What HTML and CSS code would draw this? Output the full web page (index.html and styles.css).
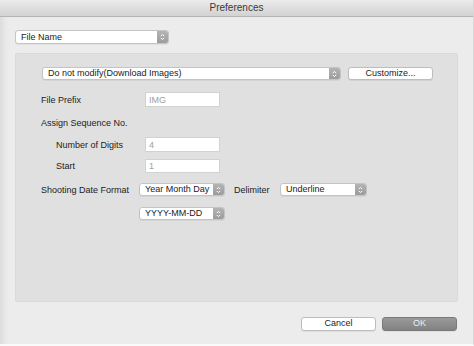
FILE: index.html
```html
<html>
<head>
<meta charset="utf-8"/>
<link rel="stylesheet" href="styles.css">
</head>
<body>

<div class="window">
  <div class="titlebar">Preferences</div>

  <div class="content">
    <div class="select top-select">
      <span class="select-text">File Name</span>
      <span class="select-arrow"><svg width="5" height="8" viewBox="0 0 5 8"><path d="M0.8 3.1 L2.5 1.4 L4.2 3.1 M0.8 4.9 L2.5 6.6 L4.2 4.9" fill="none" stroke="#fff" stroke-width="1"/></svg></span>
    </div>

    <div class="group">
      <div class="row row-mode">
        <div class="select mode-select">
          <span class="select-text">Do not modify(Download Images)</span>
          <span class="select-arrow"><svg width="5" height="8" viewBox="0 0 5 8"><path d="M0.8 3.1 L2.5 1.4 L4.2 3.1 M0.8 4.9 L2.5 6.6 L4.2 4.9" fill="none" stroke="#fff" stroke-width="1"/></svg></span>
        </div>
        <div class="button customize">Customize...</div>
      </div>

      <div class="row row-prefix">
        <span class="label">File Prefix</span>
        <div class="input">IMG</div>
      </div>

      <div class="row row-assign">
        <span class="label">Assign Sequence No.</span>
      </div>

      <div class="row row-digits">
        <span class="label indent">Number of Digits</span>
        <div class="input">4</div>
      </div>

      <div class="row row-start">
        <span class="label indent">Start</span>
        <div class="input">1</div>
      </div>

      <div class="row row-date">
        <span class="label date-label">Shooting Date Format</span>
        <div class="select date-select">
          <span class="select-text">Year Month Day</span>
          <span class="select-arrow"><svg width="5" height="8" viewBox="0 0 5 8"><path d="M0.8 3.1 L2.5 1.4 L4.2 3.1 M0.8 4.9 L2.5 6.6 L4.2 4.9" fill="none" stroke="#fff" stroke-width="1"/></svg></span>
        </div>
        <span class="label delim-label">Delimiter</span>
        <div class="select delim-select">
          <span class="select-text">Underline</span>
          <span class="select-arrow"><svg width="5" height="8" viewBox="0 0 5 8"><path d="M0.8 3.1 L2.5 1.4 L4.2 3.1 M0.8 4.9 L2.5 6.6 L4.2 4.9" fill="none" stroke="#fff" stroke-width="1"/></svg></span>
        </div>
      </div>

      <div class="row row-pattern">
        <div class="select date-select">
          <span class="select-text">YYYY-MM-DD</span>
          <span class="select-arrow"><svg width="5" height="8" viewBox="0 0 5 8"><path d="M0.8 3.1 L2.5 1.4 L4.2 3.1 M0.8 4.9 L2.5 6.6 L4.2 4.9" fill="none" stroke="#fff" stroke-width="1"/></svg></span>
        </div>
      </div>
    </div>

    <div class="buttons">
      <div class="button cancel">Cancel</div>
      <div class="button ok">OK</div>
    </div>
  </div>
</div>

</body>
</html>
```

FILE: styles.css
```css
/* Preferences dialog */
body
	{margin:0;
	background-color:#ececec;
	font-family:"Liberation Sans","Arial",sans-serif;
	font-size:9px;
	color:#222222;}
.window
	{width:474px;
	height:346px;
	box-sizing:border-box;
	background:linear-gradient(to right, #dcdcdc 0, #e9e9e9 6px, #ececec 10px);
	border-right:1px solid #d8d8d8;
	border-bottom:2px solid #fafafa;
	display:flex;
	flex-direction:column;}
.titlebar
	{height:17px;
	box-sizing:border-box;
	background:linear-gradient(#ebebeb, #d2d2d2);
	border-bottom:1px solid #b4b4b4;
	text-align:center;
	font-size:10px;
	line-height:16px;
	color:#3a3a3a;}
.content
	{padding:13px 15px 0 15px;}

/* popup buttons */
.select
	{display:flex;
	align-items:center;
	box-sizing:border-box;
	height:13px;
	background-color:#ffffff;
	border:1px solid #c4c4c4;
	border-radius:3px;
	overflow:hidden;
	box-shadow:0 1px 0 rgba(0,0,0,0.05);}
.select-text
	{flex:1;
	padding-left:5px;
	white-space:nowrap;
	line-height:11px;}
.select-arrow
	{width:11px;
	height:100%;
	display:flex;
	align-items:center;
	justify-content:center;
	background:linear-gradient(#b4b4b4, #9c9c9c);}
.top-select
	{width:154px;
	height:14px;}
.mode-select
	{width:299px;}
.date-select
	{width:86px;}
.delim-select
	{width:87px;}

/* group box */
.group
	{margin-top:9px;
	height:249px;
	box-sizing:border-box;
	background-color:#e0e0e0;
	border:1px solid #dadada;
	border-radius:2px;
	padding:13px 0 0 25px;}
.row
	{display:flex;
	align-items:center;}
.label
	{width:104px;
	white-space:nowrap;}
.label.indent
	{width:89px;
	padding-left:15px;}
.row-mode
	{margin-left:1px;
	height:13px;}
.row-prefix
	{margin-top:12px;
	height:15px;}
.row-assign
	{margin-top:9px;
	height:14px;}
.row-digits
	{margin-top:7px;
	height:15px;}
.row-start
	{margin-top:7px;
	height:14px;}
.row-date
	{margin-top:10px;
	height:13px;}
.row-pattern
	{margin-top:11px;
	height:13px;
	padding-left:98px;}
.date-label
	{width:98px;}
.delim-label
	{width:46px;
	padding-left:9px;}

.input
	{width:75px;
	height:100%;
	box-sizing:border-box;
	background-color:#ffffff;
	border:1px solid #d2d2d2;
	color:#a0a0a0;
	padding-left:3px;
	display:flex;
	align-items:center;}

/* push buttons */
.button
	{box-sizing:border-box;
	height:13px;
	border-radius:3px;
	text-align:center;
	line-height:11px;
	background-color:#ffffff;
	border:1px solid #bdbdbd;
	box-shadow:0 1px 0 rgba(0,0,0,0.06);}
.customize
	{width:85px;
	margin-left:7px;}
.buttons
	{display:flex;
	justify-content:flex-end;
	margin-top:15px;
	padding-right:1px;
	gap:6px;}
.cancel
	{width:75px;
	height:14px;}
.ok
	{width:75px;
	height:14px;
	background:linear-gradient(#9a9a9a, #828282);
	border-color:#7a7a7a;
	color:#eeeeee;}
```
